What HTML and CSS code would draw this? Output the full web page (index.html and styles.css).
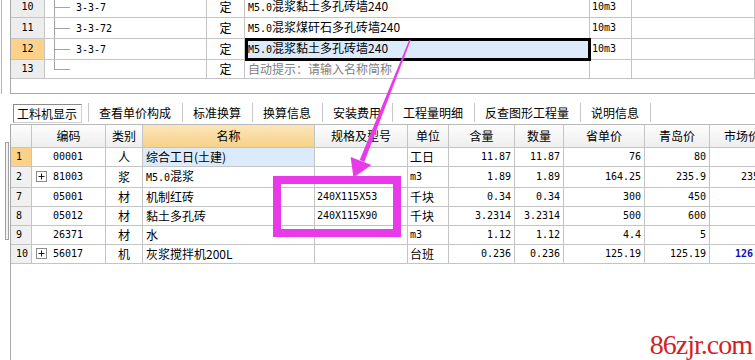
FILE: index.html
```html
<!DOCTYPE html>
<html lang="zh-CN">
<head>
  <meta charset="UTF-8" />
  <title>工料机显示</title>
  <link rel="stylesheet" href="styles.css">
</head>
<body>
  <div class="app">
    <div class="gutter">
      <div class="gutter-top"></div>
      <div class="splitter"></div>
    </div>

    <div class="main">
      <!-- 定额子目 -->
      <div class="top-pane">
        <table class="grid quota">
          <colgroup>
            <col class="q-no"><col class="q-tree"><col class="q-kind"><col class="q-name"><col class="q-unit"><col class="q-rest">
          </colgroup>
          <tr>
            <td class="no mono">10</td>
            <td class="tree"><span class="mono">3-3-7</span></td>
            <td class="kind">定</td>
            <td class="name"><span class="mono">M5.0</span>混浆黏土多孔砖墙240</td>
            <td class="unit mono">10m3</td>
            <td></td>
          </tr>
          <tr>
            <td class="no mono">11</td>
            <td class="tree"><span class="mono">3-3-72</span></td>
            <td class="kind">定</td>
            <td class="name"><span class="mono">M5.0</span>混浆煤矸石多孔砖墙240</td>
            <td class="unit mono">10m3</td>
            <td></td>
          </tr>
          <tr>
            <td class="no cur mono">12</td>
            <td class="tree"><span class="mono">3-3-7</span></td>
            <td class="kind">定</td>
            <td class="name sel"><span class="mono">M5.0</span>混浆黏土多孔砖墙240</td>
            <td class="unit mono">10m3</td>
            <td></td>
          </tr>
          <tr>
            <td class="no mono">13</td>
            <td class="tree last"></td>
            <td class="kind">定</td>
            <td class="name hint">自动提示：请输入名称简称</td>
            <td class="unit"></td>
            <td></td>
          </tr>
        </table>
      </div>

      <div class="tabs">
        <span class="tab on">工料机显示</span>
        <span class="tab">查看单价构成</span>
        <span class="tab">标准换算</span>
        <span class="tab">换算信息</span>
        <span class="tab">安装费用</span>
        <span class="tab">工程量明细</span>
        <span class="tab">反查图形工程量</span>
        <span class="tab">说明信息</span>
      </div>

      <!-- 工料机 -->
      <div class="items-pane">
        <table class="grid items">
          <colgroup>
            <col class="i-no"><col class="i-code"><col class="i-type"><col class="i-name"><col class="i-spec"><col class="i-unit">
            <col class="i-qty"><col class="i-num"><col class="i-prov"><col class="i-qd"><col class="i-mkt">
          </colgroup>
          <tr>
            <th></th><th>编码</th><th>类别</th><th class="hot">名称</th><th>规格及型号</th><th>单位</th>
            <th>含量</th><th>数量</th><th>省单价</th><th>青岛价</th><th>市场价</th>
          </tr>
          <tr>
            <td class="no cur mono">1</td>
            <td class="code mono">00001</td>
            <td class="type">人</td>
            <td class="name sel-lite">综合工日(土建)</td>
            <td class="spec"></td>
            <td class="unit">工日</td>
            <td class="n">11.87</td><td class="n">11.87</td><td class="n">76</td><td class="n">80</td><td class="n"></td>
          </tr>
          <tr>
            <td class="no mono">2</td>
            <td class="code mono"><svg class="plus" width="11" height="11" viewBox="0 0 11 11"><rect x="0.5" y="0.5" width="10" height="10" fill="#fff" stroke="#8c8c8c"/><path d="M2.5 5.5h6M5.5 2.5v6" stroke="#1a1a1a"/></svg>81003</td>
            <td class="type">浆</td>
            <td class="name"><span class="mono">M5.0</span>混浆</td>
            <td class="spec"></td>
            <td class="unit mono">m3</td>
            <td class="n">1.89</td><td class="n">1.89</td><td class="n">164.25</td><td class="n">235.9</td><td class="n">235.9</td>
          </tr>
          <tr>
            <td class="no mono">7</td>
            <td class="code mono">05001</td>
            <td class="type">材</td>
            <td class="name">机制红砖</td>
            <td class="spec mono">240X115X53</td>
            <td class="unit">千块</td>
            <td class="n">0.34</td><td class="n">0.34</td><td class="n">300</td><td class="n">450</td><td class="n"></td>
          </tr>
          <tr>
            <td class="no mono">8</td>
            <td class="code mono">05012</td>
            <td class="type">材</td>
            <td class="name">黏土多孔砖</td>
            <td class="spec mono">240X115X90</td>
            <td class="unit">千块</td>
            <td class="n">3.2314</td><td class="n">3.2314</td><td class="n">500</td><td class="n">600</td><td class="n"></td>
          </tr>
          <tr>
            <td class="no mono">9</td>
            <td class="code mono">26371</td>
            <td class="type">材</td>
            <td class="name">水</td>
            <td class="spec"></td>
            <td class="unit mono">m3</td>
            <td class="n">1.12</td><td class="n">1.12</td><td class="n">4.4</td><td class="n">5</td><td class="n"></td>
          </tr>
          <tr>
            <td class="no mono">10</td>
            <td class="code mono"><svg class="plus" width="11" height="11" viewBox="0 0 11 11"><rect x="0.5" y="0.5" width="10" height="10" fill="#fff" stroke="#8c8c8c"/><path d="M2.5 5.5h6M5.5 2.5v6" stroke="#1a1a1a"/></svg>56017</td>
            <td class="type">机</td>
            <td class="name">灰浆搅拌机200L</td>
            <td class="spec"></td>
            <td class="unit">台班</td>
            <td class="n">0.236</td><td class="n">0.236</td><td class="n">125.19</td><td class="n">125.19</td><td class="n up">126.19</td>
          </tr>
        </table>
      </div>
    </div>

    <!-- 标注 -->
    <div class="mark-box"></div>
    <svg class="arrow" width="755" height="360" viewBox="0 0 755 360">
      <polygon points="409.3,39.7 410.7,40.3 364.3,161.9 359.7,160.1" />
      <polygon points="350.6,156.9 371.4,165.1 353.5,177.5" />
    </svg>
    <div class="watermark">86zjr.com</div>
  </div>
</body>
</html>
```

FILE: styles.css
```css
* {
  box-sizing: border-box;
}

body {
  margin: 0;
  background: #fff;
  color: #000;
  font: 12px/18px "Noto Sans CJK SC", sans-serif;
}

td, th {
  padding: 0;
}

.app {
  position: relative;
  width: 755px;
  height: 360px;
  overflow: hidden;
  display: flex;
}

.gutter {
  width: 10px;
  flex: none;
}
.gutter-top {
  height: 94px;
  margin-left: 1px;
  border-left: 1px solid #b4b4b4;
}
.splitter {
  width: 4px;
  height: 98px;
  margin: 48px 0 0 5px;
  border: 1px solid #a0a0a0;
  background: #f2f2f2;
}

.main {
  flex: 1;
  min-width: 0;
  display: flex;
  flex-direction: column;
}

.mono {
  font-family: "DejaVu Sans Mono", monospace;
  font-size: 10px;
}

/* grids */
.grid {
  border-collapse: separate;
  border-spacing: 0;
  table-layout: fixed;
}
.grid td, .grid th {
  border-right: 1px solid #c4c4c4;
  border-bottom: 1px solid #c4c4c4;
  white-space: nowrap;
  overflow: hidden;
}

.top-pane {
  height: 94px;
  border-left: 1px solid #a8a8a8;
  border-bottom: 1px solid #a8a8a8;
  overflow: hidden;
}
.quota {
  width: 744px;
  margin-top: -3px;
}
.quota td {
  height: 19px;
}
.q-no { width: 34px; }
.q-tree { width: 162px; }
.q-kind { width: 38px; }
.q-name { width: 345px; }
.q-unit { width: 42px; }
.q-rest { width: 123px; }

.quota .no {
  text-align: center;
  background: #ededed;
}
.grid .no.cur {
  background: #fcd28a;
}
.tree {
  padding-left: 31px;
  background:
    linear-gradient(#a4a4a4, #a4a4a4) 9px 0 / 1px 100% no-repeat,
    linear-gradient(#a4a4a4, #a4a4a4) 9px 50% / 16px 1px no-repeat;
}
.tree.last {
  background-size: 1px 50%, 16px 1px;
}
.kind {
  text-align: center;
}
.quota .name {
  padding-left: 3px;
}
.quota .unit {
  padding-left: 2px;
}
.grid .name.sel {
  position: relative;
  overflow: visible;
  background: #dcebfb;
}
.name.sel::after {
  content: "";
  position: absolute;
  left: 0;
  top: -1px;
  right: -2px;
  bottom: -2px;
  border: 3px solid #000;
}
.hint {
  color: #808080;
}

/* tabs */
.tabs {
  height: 30px;
  padding: 9px 0 0 3px;
  display: flex;
  align-items: flex-start;
}
.tab {
  height: 19px;
  line-height: 19px;
  padding: 0 11px 0 10px;
  border-left: 1px solid #c8c8c8;
}
.tab:last-child {
  border-right: 1px solid #c8c8c8;
}
.tab.on {
  margin: 1px 6px 0 0;
  padding: 0 4px 0 3px;
  line-height: 17px;
  border: 1px solid #8a8a8a;
  border-right-color: #cfcfcf;
  border-bottom-color: #cfcfcf;
}

.items-pane {
  flex: 1;
  border-left: 1px solid #a8a8a8;
  border-top: 1px solid #b8b8b8;
  overflow: hidden;
}
.items {
  width: 764px;
}
.i-no { width: 21px; }
.i-code { width: 74px; }
.i-type { width: 37px; }
.i-name { width: 172px; }
.i-spec { width: 93px; }
.i-unit { width: 41px; }
.i-qty { width: 66px; }
.i-num { width: 49px; }
.i-prov { width: 81px; }
.i-qd { width: 65px; }
.i-mkt { width: 65px; }

.items th {
  height: 23px;
  font-weight: normal;
  text-align: center;
  background: linear-gradient(#fdfdfd, #eeeeee);
}
.items th.hot {
  background: linear-gradient(#fde6ba, #f6d189);
}
.items td {
  height: 18.67px;
}
.items .no {
  padding-left: 5px;
  background: #f0f0f0;
}
.code {
  padding-left: 21px;
}
.plus {
  vertical-align: -2px;
  margin: 0 6px 0 -17px;
}
.type {
  text-align: center;
}
.items .name {
  padding-left: 3px;
}
.sel-lite {
  background: #dcebfb;
}
.spec, .items .unit {
  padding-left: 2px;
}
.n {
  text-align: right;
  padding-right: 3px;
  font-family: "DejaVu Sans Mono", monospace;
  font-size: 10px;
}
.n.up {
  color: #0a10b8;
  font-weight: bold;
}

/* annotation overlays */
.mark-box {
  position: absolute;
  left: 273px;
  top: 176px;
  width: 128px;
  height: 61px;
  border: 8px solid #e83ae8;
}
.arrow {
  position: absolute;
  left: 0;
  top: 0;
  fill: #e83ae8;
  pointer-events: none;
}
.watermark {
  position: absolute;
  right: 3px;
  bottom: 1px;
  font: 28px/1 "Liberation Serif", serif;
  letter-spacing: -1px;
  color: #d41f1f;
}
```
